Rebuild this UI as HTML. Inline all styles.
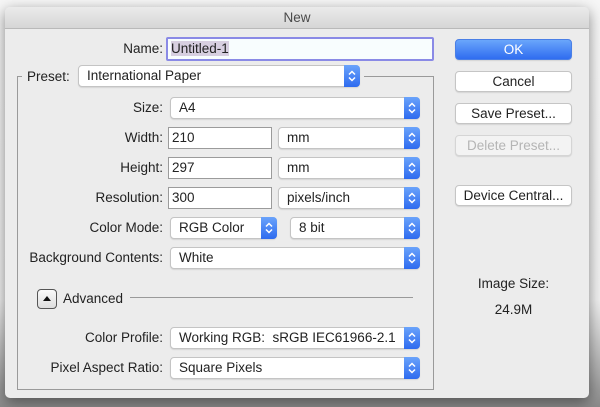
<!DOCTYPE html>
<html><head><style>
body{margin:0;width:600px;height:407px;background:linear-gradient(#f6f6f6 0,#f0f0f0 300px,#8a8a8a 407px);font-family:"Liberation Sans",sans-serif;font-size:13.5px;color:#222;position:relative;overflow:hidden}
.win{position:absolute;left:5px;top:7px;width:584px;height:391px;background:#ececec;border-radius:5px;box-shadow:0 4px 14px rgba(0,0,0,.45);overflow:hidden}
.title{position:absolute;left:0;top:0;width:100%;height:21px;background:linear-gradient(#ebebeb,#d6d6d6);border-bottom:1px solid #b9b9b9;text-align:center;line-height:21px;color:#4a4a4a}
.a{position:absolute}
.lbl{position:absolute;text-align:right;width:200px;line-height:21px}
.inp{position:absolute;background:#fff;border:1px solid #9b9b9b;box-sizing:border-box;height:22px;line-height:20px;padding-left:3px}
.pop{position:absolute;background:#fff;border:1px solid #c4c4c4;border-radius:4px;box-sizing:border-box;height:22px;line-height:20px;padding-left:8px;box-shadow:0 1px 1px rgba(0,0,0,.1)}
.pop .ar{position:absolute;right:-1px;top:-1px;width:16px;height:22px;background:linear-gradient(#6aa3fb,#2e6bef);border-radius:0 4px 4px 0}
.ar svg{position:absolute;left:4px;top:5px}
.btn{position:absolute;left:450px;width:117px;height:21px;background:#fff;border:1px solid #c5c5c5;border-radius:4px;box-sizing:border-box;text-align:center;line-height:19px;box-shadow:0 1px 1px rgba(0,0,0,.1)}
</style></head><body>
<div class="win">
<div class="title">New</div>
</div>
<div class="a" style="left:0;top:0;width:600px;height:407px">
<div class="lbl" style="left:-37px;top:38px">Name:</div>
<div class="inp" style="left:166px;top:37px;width:268px;height:24px;border:2px solid #8a8ae6;border-radius:2px;background:#f8fdfe"><span style="background:#d7cfe0">Untitled-1</span></div>
<div class="a" style="left:17px;top:76px;width:415px;height:312px;border:1px solid #9a9a9a"></div>
<div class="a" style="left:22px;top:66px;width:342px;height:21px;background:#ececec"></div>
<div class="a" style="left:27px;top:66px;line-height:21px">Preset:</div>
<div class="pop" style="left:78px;top:65px;width:282px">International Paper<div class="ar"><svg width="8" height="12"><path d="M1 4.5L4 1.5L7 4.5M1 7.5L4 10.5L7 7.5" fill="none" stroke="#fff" stroke-width="1.5"/></svg></div></div>

<div class="lbl" style="left:-37px;top:97px">Size:</div>
<div class="pop" style="left:170px;top:97px;width:250px">A4<div class="ar"><svg width="8" height="12"><path d="M1 4.5L4 1.5L7 4.5M1 7.5L4 10.5L7 7.5" fill="none" stroke="#fff" stroke-width="1.5"/></svg></div></div>

<div class="lbl" style="left:-37px;top:127px">Width:</div>
<div class="inp" style="left:168px;top:127px;width:104px">210</div>
<div class="pop" style="left:278px;top:127px;width:142px">mm<div class="ar"><svg width="8" height="12"><path d="M1 4.5L4 1.5L7 4.5M1 7.5L4 10.5L7 7.5" fill="none" stroke="#fff" stroke-width="1.5"/></svg></div></div>

<div class="lbl" style="left:-37px;top:157px">Height:</div>
<div class="inp" style="left:168px;top:157px;width:104px">297</div>
<div class="pop" style="left:278px;top:157px;width:142px">mm<div class="ar"><svg width="8" height="12"><path d="M1 4.5L4 1.5L7 4.5M1 7.5L4 10.5L7 7.5" fill="none" stroke="#fff" stroke-width="1.5"/></svg></div></div>

<div class="lbl" style="left:-37px;top:187px">Resolution:</div>
<div class="inp" style="left:168px;top:187px;width:104px">300</div>
<div class="pop" style="left:278px;top:187px;width:142px">pixels/inch<div class="ar"><svg width="8" height="12"><path d="M1 4.5L4 1.5L7 4.5M1 7.5L4 10.5L7 7.5" fill="none" stroke="#fff" stroke-width="1.5"/></svg></div></div>

<div class="lbl" style="left:-37px;top:217px">Color Mode:</div>
<div class="pop" style="left:170px;top:217px;width:107px">RGB Color<div class="ar"><svg width="8" height="12"><path d="M1 4.5L4 1.5L7 4.5M1 7.5L4 10.5L7 7.5" fill="none" stroke="#fff" stroke-width="1.5"/></svg></div></div>
<div class="pop" style="left:290px;top:217px;width:130px">8 bit<div class="ar"><svg width="8" height="12"><path d="M1 4.5L4 1.5L7 4.5M1 7.5L4 10.5L7 7.5" fill="none" stroke="#fff" stroke-width="1.5"/></svg></div></div>

<div class="lbl" style="left:-37px;top:247px">Background Contents:</div>
<div class="pop" style="left:170px;top:247px;width:250px">White<div class="ar"><svg width="8" height="12"><path d="M1 4.5L4 1.5L7 4.5M1 7.5L4 10.5L7 7.5" fill="none" stroke="#fff" stroke-width="1.5"/></svg></div></div>

<div class="a" style="left:37px;top:289px;width:20px;height:20px;box-sizing:border-box;border:1px solid #555;border-radius:4px;background:linear-gradient(#fafafa,#ddd)"><svg width="18" height="18" style="position:absolute;left:0;top:0"><path d="M5 11L9 6L13 11Z" fill="#111"/></svg></div>
<div class="a" style="left:63px;top:289px;line-height:20px">Advanced</div>
<div class="a" style="left:130px;top:297px;width:283px;height:1px;background:#9a9a9a"></div>

<div class="lbl" style="left:-37px;top:327px">Color Profile:</div>
<div class="pop" style="left:170px;top:327px;width:250px">Working RGB:&nbsp; sRGB IEC61966-2.1<div class="ar"><svg width="8" height="12"><path d="M1 4.5L4 1.5L7 4.5M1 7.5L4 10.5L7 7.5" fill="none" stroke="#fff" stroke-width="1.5"/></svg></div></div>
<div class="lbl" style="left:-37px;top:357px">Pixel Aspect Ratio:</div>
<div class="pop" style="left:170px;top:357px;width:250px">Square Pixels<div class="ar"><svg width="8" height="12"><path d="M1 4.5L4 1.5L7 4.5M1 7.5L4 10.5L7 7.5" fill="none" stroke="#fff" stroke-width="1.5"/></svg></div></div>

<div class="btn" style="left:455px;top:39px;background:linear-gradient(#6aa6fb,#2f6cf0);border-color:#4a7fe6;color:#fff">OK</div>
<div class="btn" style="left:455px;top:71px">Cancel</div>
<div class="btn" style="left:455px;top:103px">Save Preset...</div>
<div class="btn" style="left:455px;top:135px;color:#b5b5b5;background:#f3f3f3;border-color:#d5d5d5">Delete Preset...</div>
<div class="btn" style="left:455px;top:185px">Device Central...</div>
<div class="a" style="left:455px;top:276px;width:117px;text-align:center">Image Size:</div>
<div class="a" style="left:455px;top:302px;width:117px;text-align:center">24.9M</div>
</div>
</body></html>
